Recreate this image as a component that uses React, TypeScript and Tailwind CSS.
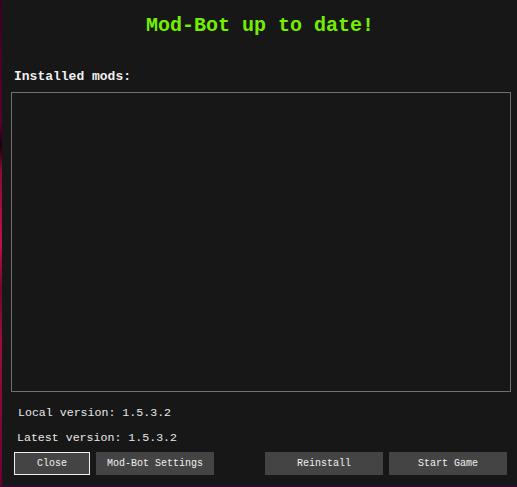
import React from "react";

const mono = { fontFamily: "Consolas, 'Liberation Mono', 'DejaVu Sans Mono', monospace" };

export default function App() {
  return (
    <div className="w-[517px] h-[487px] flex flex-col overflow-hidden bg-[#3a0022]" style={mono}>
      <div className="flex h-[486px]">
        <div className="w-[2px] h-full bg-[linear-gradient(to_bottom,#3a0020_0%,#5a0030_25%,#1a0010_30%,#8a0a3c_35%,#c0104a_50%,#70062e_60%,#a00c40_70%,#6a0030_100%)]" />
        <div className="flex-1 bg-[#171717] flex flex-col">
          <div className="pt-[14px] h-[38px] text-center text-[20px] leading-[24px] font-bold text-[#74ee00] pl-[1px]">
            Mod-Bot up to date!
          </div>
          <div className="mt-[31px] ml-[12px] text-[13px] leading-[16px] font-bold text-[#f0f0f0]">
            Installed mods:
          </div>
          <div className="mt-[7px] ml-[9px] w-[500px] h-[300px] border border-[#707070]" />
          <div className="mt-[13px] ml-[16px] text-[11.6px] leading-[16px] text-[#e8e8e8]">
            Local version: 1.5.3.2
          </div>
          <div className="mt-[9px] ml-[15px] text-[11.6px] leading-[16px] text-[#e8e8e8]">
            Latest version: 1.5.3.2
          </div>
          <div className="mt-[6px] ml-[12px] flex h-[23px] text-[10px] text-[#f0f0f0]">
            <button className="w-[76px] h-full bg-[#444444] border border-[#f0f0f0] flex items-center justify-center">
              Close
            </button>
            <button className="ml-[6px] w-[118px] h-full bg-[#444444] flex items-center justify-center">
              Mod-Bot Settings
            </button>
            <button className="ml-[51px] w-[118px] h-full bg-[#444444] flex items-center justify-center">
              Reinstall
            </button>
            <button className="ml-[6px] w-[118px] h-full bg-[#444444] flex items-center justify-center">
              Start Game
            </button>
          </div>
        </div>
      </div>
      <div className="h-[1px] bg-[#4a0030]" />
    </div>
  );
}
